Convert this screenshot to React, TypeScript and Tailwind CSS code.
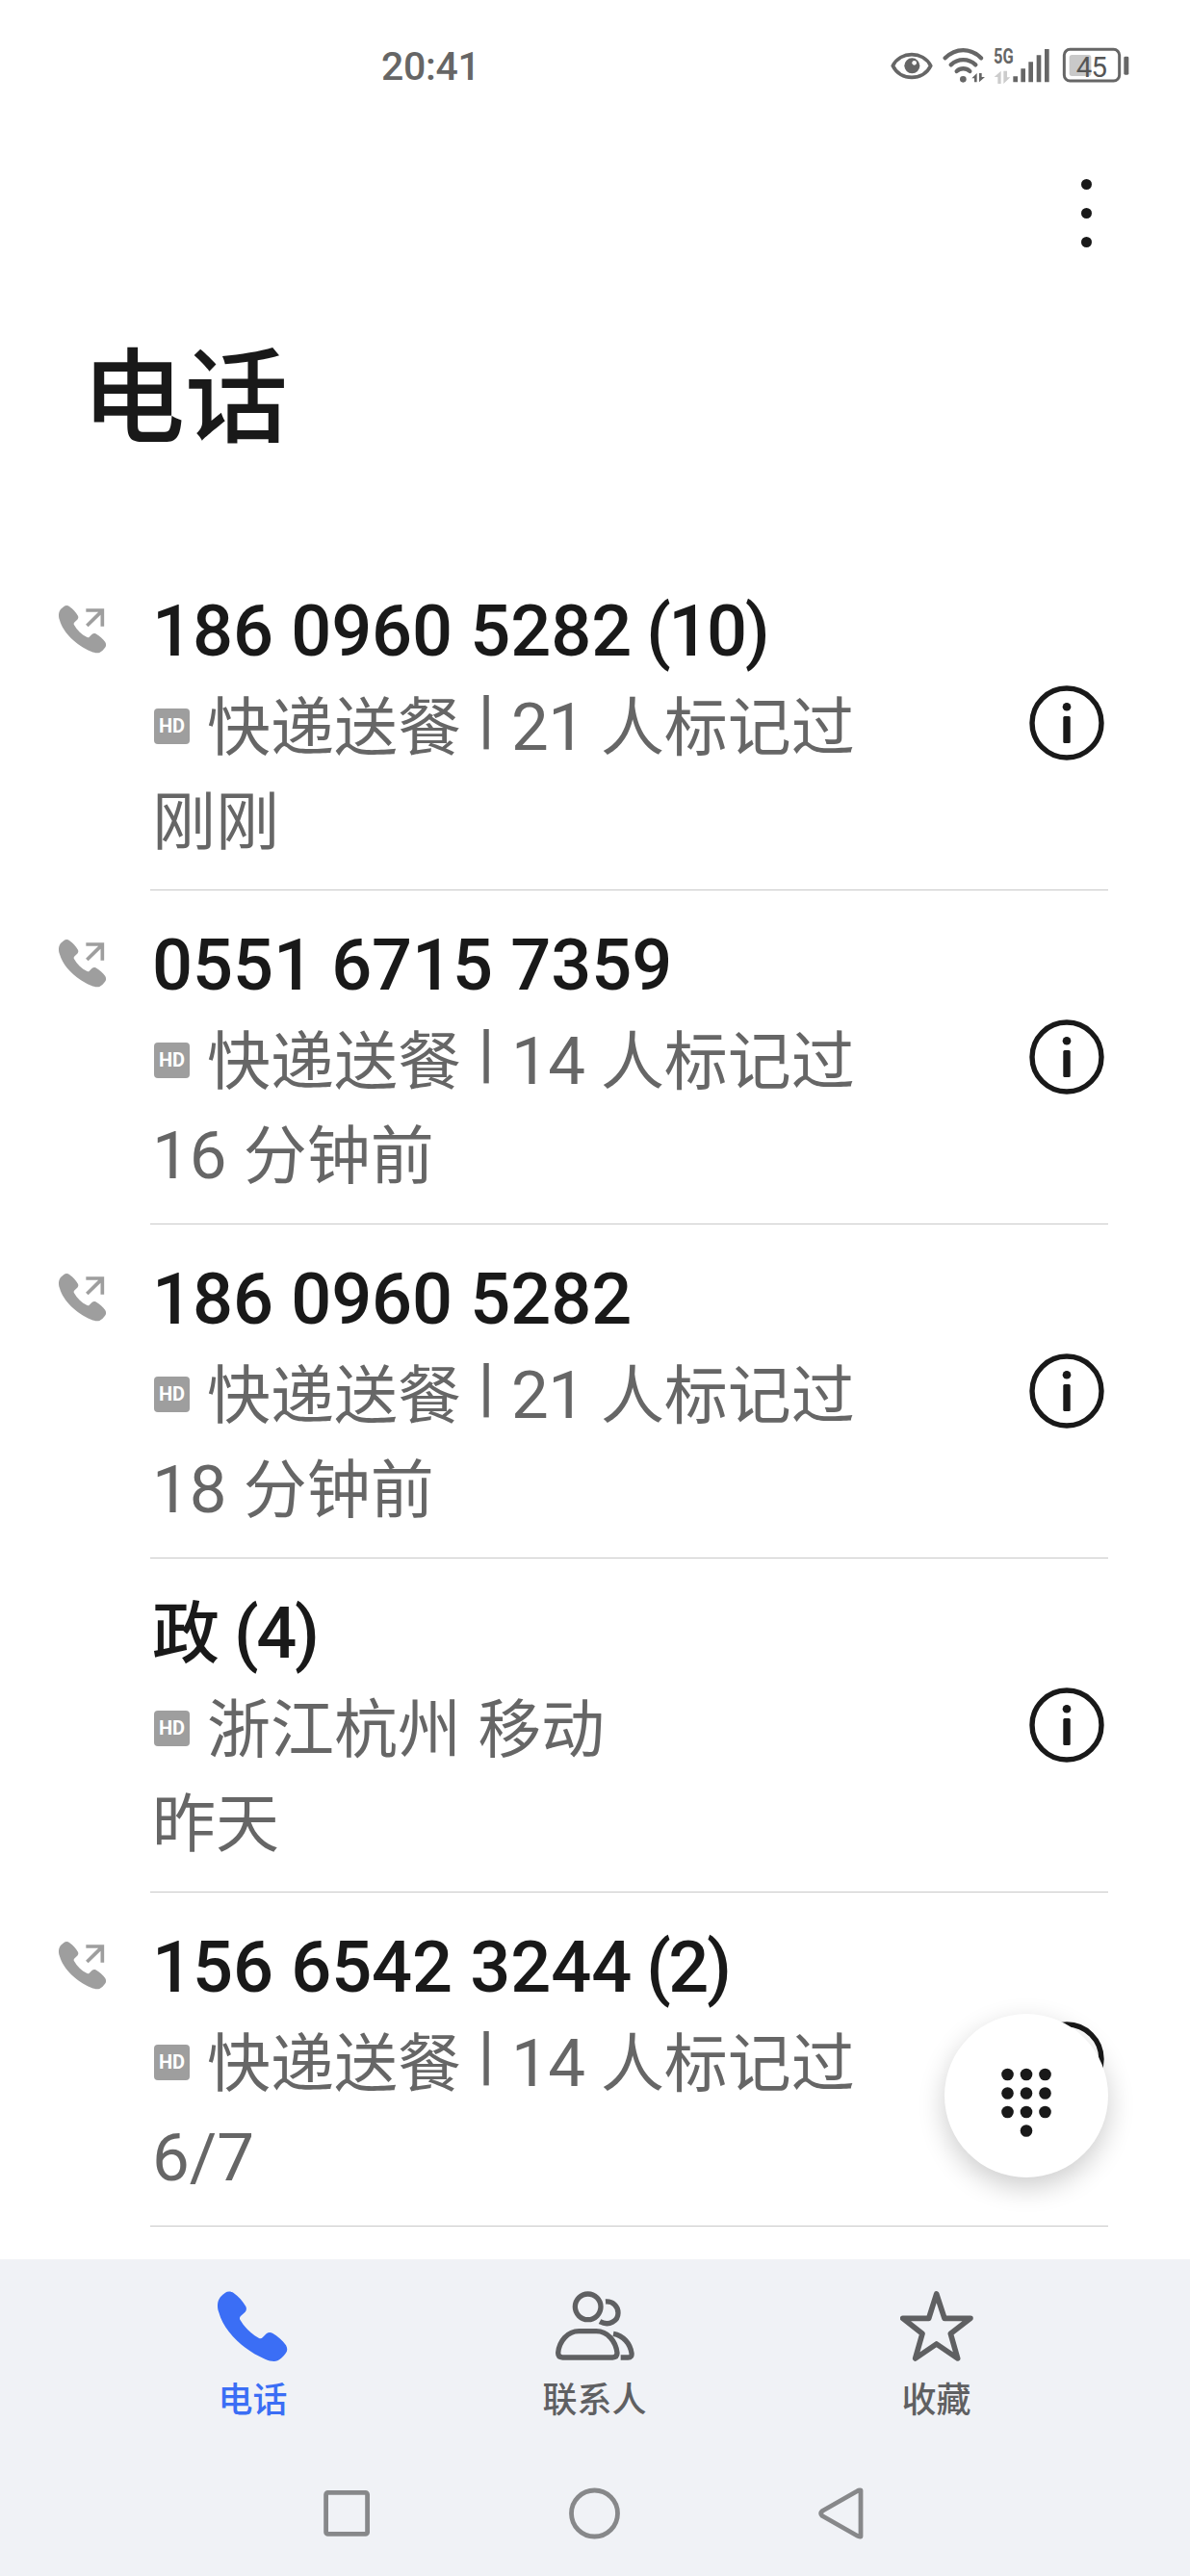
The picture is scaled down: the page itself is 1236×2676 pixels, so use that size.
import React from 'react';

interface Call {
  name: string;
  count?: number;
  outgoing: boolean;
  label: string;
  marked?: string;
  time: string;
}

const calls: Call[] = [
  { name: '186 0960 5282', count: 10, outgoing: true, label: '快递送餐', marked: '21 人标记过', time: '刚刚' },
  { name: '0551 6715 7359', outgoing: true, label: '快递送餐', marked: '14 人标记过', time: '16 分钟前' },
  { name: '186 0960 5282', outgoing: true, label: '快递送餐', marked: '21 人标记过', time: '18 分钟前' },
  { name: '政', count: 4, outgoing: false, label: '浙江杭州 移动', time: '昨天' },
  { name: '156 6542 3244', count: 2, outgoing: true, label: '快递送餐', marked: '14 人标记过', time: '6/7' },
];

const HANDSET =
  'M0 42C1 20 14 12 24 4C31 -1 42 -1 50 5C66 16 78 30 88 47C91 54 90 59 86 64L72 77C69 80 68 84 70 88C84 112 104 132 128 145C133 148 137 147 140 144L152 132C158 127 165 127 171 130C187 139 202 152 213 168C218 177 218 185 213 192C205 204 195 212 187 216C176 220 162 217 148 211C80 182 20 125 4 66C0 56 0 50 0 42Z';

// Han glyphs are set a little smaller than the digits around them
const Mixed: React.FC<{ text: string }> = ({ text }) => (
  <>
    {text.split(/([\u4e00-\u9fa5]+)/).map((part, i) =>
      i % 2 ? (
        <span key={i} className="text-[66px] tracking-normal">
          {part}
        </span>
      ) : (
        part
      ),
    )}
  </>
);

const StatusBar = () => (
  <div className="flex h-[136px] items-start pl-[396px] pr-[63px] text-[#666]">
    <div className="mt-[49px] text-[41px] leading-[41px] font-medium tracking-[-0.3px]">20:41</div>
    <svg className="ml-auto mt-[46px]" width="249" height="44" viewBox="0 0 747 132">
      <g transform="translate(-42 -48)" fill="none" stroke="#666">
        {/* eye comfort */}
        <path d="M52 115C75 68 147 68 170 115C147 163 75 163 52 115Z" strokeWidth="11" />
        <circle cx="112" cy="115" r="24" fill="#666" stroke="none" />
        <circle cx="119" cy="106" r="7" fill="#fff" stroke="none" />
        {/* wifi */}
        <g strokeWidth="13" strokeLinecap="round">
          <path d="M215 91C248 58 295 58 327 91" />
          <path d="M233 112C255 91 288 91 310 112" />
          <path d="M251 132C263 121 280 121 292 132" />
        </g>
        <circle cx="271" cy="157" r="10" fill="#666" stroke="none" />
        <path d="M298 154L314 138V166H306V154ZM321 138V166L339 150H329V138Z" fill="#666" stroke="none" />
        {/* mobile data arrows */}
        <path d="M368 150L389 131V171H379V150ZM397 131V171L418 151H408V131Z" fill="#ccc" stroke="none" />
        <g strokeWidth="14">
          <path d="M434 148V166M458 124V166M482 103V166M507 82V166M532 63V166" />
        </g>
        {/* battery */}
        <rect x="602" y="81" width="68" height="66" rx="8" fill="#c9c9c9" stroke="none" />
        <rect x="586" y="64" width="172" height="98" rx="18" strokeWidth="9" />
        <rect x="772" y="86" width="15" height="57" rx="4" fill="#666" stroke="none" />
      </g>
      <text x="324" y="61" fontSize="64" fontWeight="700" fill="#666" textLength="62" lengthAdjust="spacingAndGlyphs">
        5G
      </text>
      <text x="581" y="101" fontSize="88" fill="#555" textLength="97">
        45
      </text>
    </svg>
  </div>
);

const Header = () => (
  <header className="h-[442px] pl-[85px] pr-[100px]">
    <div className="flex h-[170px] items-center justify-end">
      <svg width="16" height="76" viewBox="0 0 16 76" fill="#191919">
        <circle cx="8.5" cy="8.5" r="5.5" />
        <circle cx="8.5" cy="38.5" r="5.5" />
        <circle cx="8.5" cy="68.5" r="5.5" />
      </svg>
    </div>
    <h1 className="mt-[55px] text-[107px] leading-[107px] font-medium">电话</h1>
  </header>
);

const CallRow: React.FC<{ call: Call }> = ({ call }) => (
  <li className="flex h-[347px] pl-[61px] pr-[85px]">
    <div className="w-[95px] shrink-0 pt-[51px]">
      {call.outgoing && (
        <svg width="50" height="50" viewBox="0 0 150 150" fill="#9e9e9e">
          <path d={HANDSET} transform="scale(.68)" />
          <path d="M85 15H136V65M88 63L135 17" fill="none" stroke="#9e9e9e" strokeWidth="11" />
        </svg>
      )}
    </div>
    <div className="flex grow items-start border-b border-[#c9c9c9]">
      <div className="grow whitespace-nowrap pl-[2px] pt-[29px]">
        <div className="flex h-[100px] items-baseline text-[74px] leading-[98px] font-medium">
          {/^\d/.test(call.name) ? (
            <span className="tracking-[-0.1px]">{call.name}</span>
          ) : (
            <span className="text-[70px]">{call.name}</span>
          )}
          {call.count && <span className="ml-[15px] tracking-[-2.4px]">({call.count})</span>}
        </div>
        <div className="flex h-[98px] items-baseline text-[69px] leading-[98px] text-[#666]">
          <span className="ml-[2px] mr-[18px] flex h-[37px] w-[37px] -translate-y-[2px] items-center justify-center self-center rounded-[4px] bg-[#9e9e9e] text-[20px] leading-none font-bold text-white">
            HD
          </span>
          <span>
            <Mixed text={call.label} />
          </span>
          {call.marked && (
            <>
              <span className="w-[52px] -translate-y-[9px] text-center text-[66px] font-semibold">|</span>
              <span className="tracking-[-0.6px]">
                <Mixed text={call.marked} />
              </span>
            </>
          )}
        </div>
        <div className="h-[98px] text-[69px] leading-[98px] text-[#666]">
          <Mixed text={call.time} />
        </div>
      </div>
      <svg className="mr-[4px] mt-[134px] shrink-0" width="78" height="78" viewBox="0 0 78 78" fill="#191919">
        <circle cx="39" cy="39" r="36" fill="none" stroke="#191919" strokeWidth="5.4" />
        <circle cx="39" cy="22.3" r="4.3" />
        <rect x="35.3" y="32" width="7.4" height="28" rx="1.5" />
      </svg>
    </div>
  </li>
);

const TabBar = () => (
  <nav className="flex h-[197px] pl-[85px] pr-[86px] text-[36px] leading-[44px] font-medium text-[#5f6062]">
    <div className="flex flex-1 flex-col items-center pt-[33px] text-[#3b6ef5]">
      <svg width="73" height="75" viewBox="0 -1 219 225" fill="currentColor">
        <path d={HANDSET} />
      </svg>
      <span className="mt-[17px]">电话</span>
    </div>
    <div className="flex flex-1 flex-col items-center pt-[33px]">
      <svg
        width="82"
        height="75"
        viewBox="0 -1 246 225"
        fill="none"
        stroke="currentColor"
        strokeWidth="16"
      >
        <circle cx="101" cy="48" r="40" />
        <path d="M22 206H178Q192 206 192 192C188 155 162 124 127 124H73C38 124 11 155 8 192Q8 206 22 206Z" />
        <path d="M156 32C178 30 195 46 195 67C195 91 168 110 138 94" />
        <path d="M180 132C212 138 232 162 237 192Q239 206 226 206H203" />
      </svg>
      <span className="mt-[17px]">联系人</span>
    </div>
    <div className="flex flex-1 flex-col items-center pt-[33px]">
      <svg width="76" height="75" viewBox="0 -1 228 225" fill="none" stroke="currentColor" strokeWidth="17" strokeLinejoin="round">
        <path d="M113 8L138 84H219L157 132L179 209L113 164L47 209L69 132L8 84H89Z" />
      </svg>
      <span className="mt-[17px]">收藏</span>
    </div>
  </nav>
);

const SystemNav = () => (
  <div className="flex h-[132px] items-start pl-[334px] pt-[39px]">
    <svg width="54" height="56" viewBox="0 0 54 56" fill="none" stroke="#87888a" strokeWidth="4.8">
      <rect x="4.6" y="6.4" width="43" height="43" rx="2" />
    </svg>
    <svg className="ml-[201px]" width="56" height="56" viewBox="0 0 56 56" fill="none" stroke="#87888a" strokeWidth="4.8">
      <circle cx="28.500" cy="28" r="24" />
    </svg>
    <svg
      className="ml-[205px]"
      width="50"
      height="56"
      viewBox="0 0 50 56"
      fill="none"
      stroke="#87888a"
      strokeWidth="4.8"
      strokeLinejoin="round"
    >
      <path d="M44 4Q42.500 3.500 40 5L4 25.500Q1.500 28 4 30.500L40 51Q42.500 52.500 44 52Z" />
    </svg>
  </div>
);

const Dialpad = () => (
  <button className="absolute left-[981px] top-[2092px] flex h-[170px] w-[170px] items-center justify-center rounded-full bg-white pt-[14px] shadow-[0_10px_28px_rgba(0,0,0,0.2)]">
    <svg width="54" height="74" viewBox="0 0 54 74" fill="#191919">
      {[8, 27.5, 47].map((y) =>
        [7.5, 27, 46.5].map((x) => <circle key={`${x}-${y}`} cx={x} cy={y} r="6.3" />),
      )}
      <circle cx="27" cy="66.5" r="6.3" />
    </svg>
  </button>
);

const App = () => (
  <div className="relative h-[2676px] w-[1236px] overflow-hidden bg-white font-[Roboto,'Noto_Sans_CJK_SC',sans-serif] text-[#191919]">
    <StatusBar />
    <Header />
    <ul>
      {calls.map((call, i) => (
        <CallRow key={i} call={call} />
      ))}
    </ul>
    <div className="mt-[34px] bg-[#f0f2f6]">
      <TabBar />
      <SystemNav />
    </div>
    <Dialpad />
  </div>
);

export default App;
